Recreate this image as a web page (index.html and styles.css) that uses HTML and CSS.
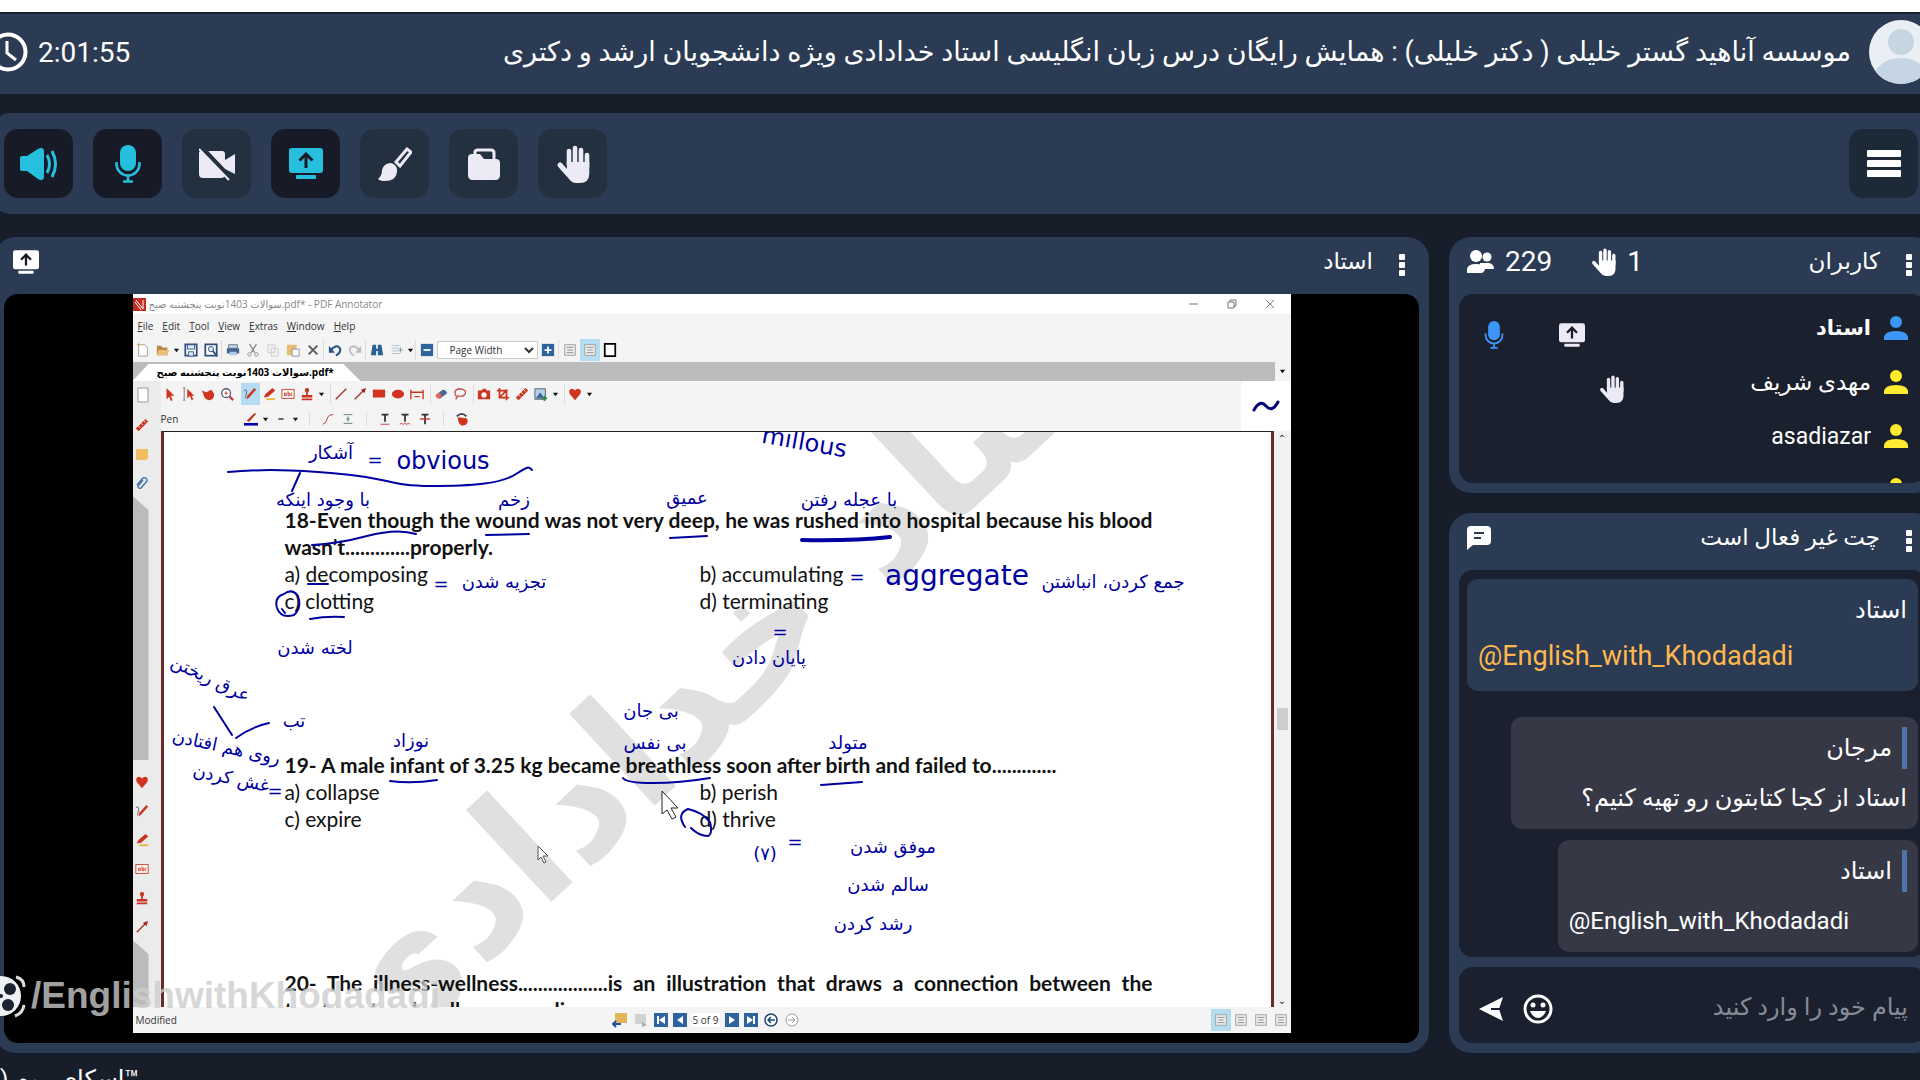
FILE: index.html
```html
<!DOCTYPE html>
<html lang="fa">
<head>
  <meta charset="UTF-8" />
  <title>Online Class</title>
  <link rel="stylesheet" href="styles.css">
</head>
<body>
  <!-- icons shared by the room and by the shared window -->
  <svg class="sprite" aria-hidden="true">
    <symbol id="i-hand" viewBox="0 0 34 38">
      <g fill="none" stroke="currentColor" stroke-width="5" stroke-linecap="round"><path d="M13 20V6M19 18V3M25 18V5M31 22V10" stroke-width="4.6"/><path d="M4 20l8 9"/></g>
      <path fill="currentColor" d="M10.700 17H33.300V29Q33 38 24 38H20Q16 38 13 34L7 26l4-2z"/>
    </symbol>
    <symbol id="i-mic" viewBox="0 0 26 38">
      <rect x="5" y="0" width="16" height="26" rx="8" fill="currentColor"/>
      <path d="M1.500 17v2a11.500 11.500 0 0 0 23 0v-2M13 31v5M8 36.500h10" fill="none" stroke="currentColor" stroke-width="2.500"/>
    </symbol>
    <symbol id="i-share" viewBox="0 0 34 31">
      <rect x="0" y="0" width="34" height="25" rx="3" fill="currentColor"/>
      <rect x="7" y="27" width="20" height="4" rx="1" fill="currentColor"/>
      <path d="M17 20V6M10.500 12.500L17 6l6.500 6.500" fill="none" stroke="#171b28" stroke-width="3"/>
    </symbol>
    <symbol id="i-user" viewBox="0 0 24 24">
      <circle cx="12" cy="6" r="6" fill="currentColor"/><path d="M0 24v-3q1-6 12-6t12 6v3z" fill="currentColor"/>
    </symbol>
    <symbol id="i-dots" viewBox="0 0 6 22">
      <g fill="currentColor"><rect width="6" height="6" rx="1"/><rect y="8" width="6" height="6" rx="1"/><rect y="16" width="6" height="6" rx="1"/></g>
    </symbol>
    <symbol id="p-down" viewBox="0 0 8 8"><path d="M1 2h6L4 6z" fill="#111"/></symbol>
    <symbol id="p-pen" viewBox="0 0 16 16"><path d="M1 4q4-2 3 3t-1 6" fill="none" stroke="#557" /><path d="M4 14l1-4 8-9 2 2-8 9z" fill="#c8341f"/></symbol>
    <symbol id="p-marker" viewBox="0 0 16 16"><path d="M2 12l2-4 8-7 3 3-8 7z" fill="#c8341f"/><path d="M5 14h10" stroke="#f0b030" stroke-width="2"/></symbol>
    <symbol id="p-text" viewBox="0 0 16 16"><rect x="1" y="3" width="14" height="10" fill="#fff" stroke="#c8341f"/><path d="M4 10V7h2v3zM8 5v5h2V7H8M13 7h-1.500v3H13" fill="none" stroke="#c8341f"/></symbol>
    <symbol id="p-stamp" viewBox="0 0 16 16"><circle cx="8" cy="3.500" r="2.500" fill="#c8341f"/><path d="M7 5h2v4h5v3H2V9h5zM2 13h12v2H2z" fill="#c8341f"/></symbol>
    <symbol id="p-arrow" viewBox="0 0 16 16"><path d="M2 14L12 4" stroke="#a02a20" stroke-width="1.500"/><path d="M9 3l6-2-2 6z" fill="#a02a20"/></symbol>
    <symbol id="p-heart" viewBox="0 0 16 16"><path d="M8 15L2 8q-2-5 2-6 3 0 4 2 1-2 4-2 4 1 2 6z" fill="#d0341f"/></symbol>
    <symbol id="p-page" viewBox="0 0 16 16"><path d="M3 1h10v14H3z" fill="#fff" stroke="#999"/></symbol>
    <symbol id="p-ruler" viewBox="0 0 16 16"><path d="M1 12L12 1l3 3L4 15z" fill="#c8341f"/><path d="M4 9l2 2M7 6l2 2M10 3l2 2" stroke="#fff"/></symbol>
    <symbol id="p-fit" viewBox="0 0 16 16"><rect x="2" y="2" width="12" height="12" fill="#eee" stroke="#999"/><path d="M4 5h8M4 11h8M5 8h6" stroke="#888"/></symbol>
  </svg>

  <div class="app">
    <header class="topbar">
      <div class="timer">
        <svg width="40" height="40" viewBox="0 0 40 40"><circle cx="20" cy="20" r="17.500" fill="none" stroke="#fff" stroke-width="4"/><path d="M19 9v12l9 7" fill="none" stroke="#fff" stroke-width="3"/></svg>
        <span>2:01:55</span>
      </div>
      <div class="room" dir="rtl">
        <svg width="64" height="64" viewBox="0 0 64 64"><clipPath id="av"><circle cx="32" cy="32" r="32"/></clipPath><g clip-path="url(#av)"><rect width="64" height="64" fill="#e9eff5"/><circle cx="32" cy="22" r="13" fill="#c6d5e0"/><ellipse cx="32" cy="58" rx="27" ry="20" fill="#c6d5e6"/></g></svg>
        <h1>موسسه آناهید گستر خلیلی ( دکتر خلیلی) : همایش رایگان درس زبان انگلیسی استاد خدادادی ویژه دانشجویان ارشد و دکتری</h1>
      </div>
    </header>

    <nav class="toolbar">
      <button class="tool on" aria-label="Speaker"><svg width="38" height="32" viewBox="0 0 38 32"><path fill="currentColor" d="M0 10q0-2 2-2h5L18 1q6-3 6 3v24q0 6-6 3L7 23H2q-2 0-2-2z"/><path d="M27 7q5 9 0 18M32 3q7 13 0 26" fill="none" stroke="currentColor" stroke-width="3"/></svg></button>
      <button class="tool on" aria-label="Microphone"><svg width="26" height="38"><use href="#i-mic"/></svg></button>
      <button class="tool" aria-label="Camera"><svg width="36" height="34" viewBox="0 0 36 34"><path fill="currentColor" d="M0 6q0-2 3-2h20q3 0 3 3v6l10-6v20l-10-5v5q0 4-4 4H4q-4 0-4-4z"/><path d="M2 0l31 33" stroke="#22303f" stroke-width="5"/><path d="M0 2l30 31" stroke="currentColor" stroke-width="2"/></svg></button>
      <button class="tool on" aria-label="Share screen"><svg width="34" height="31"><use href="#i-share"/></svg></button>
      <button class="tool" aria-label="Whiteboard"><svg width="34" height="34" viewBox="0 0 34 34"><path fill="currentColor" d="M0 32q4-3 4-9 2-7 9-7 7 2 6 9-1 9-12 9-5 0-7-2z"/><path d="M18 15L29 2l4 3-11 14z" fill="none" stroke="currentColor" stroke-width="3"/></svg></button>
      <button class="tool" aria-label="Files"><svg width="32" height="32" viewBox="0 0 32 32"><path d="M7 7V4q0-2 3-2h13q3 0 3 3v7" fill="none" stroke="currentColor" stroke-width="3"/><path fill="currentColor" d="M0 10q0-4 4-4h8l4 5h12q4 0 4 4v12q0 5-5 5H5q-5 0-5-5z"/></svg></button>
      <button class="tool" aria-label="Raise hand"><svg width="34" height="38"><use href="#i-hand"/></svg></button>
      <button class="tool menu" aria-label="Menu"><svg width="34" height="28" viewBox="0 0 34 28"><g fill="#fff"><rect width="34" height="7" rx="1"/><rect y="10" width="34" height="7" rx="1"/><rect y="20" width="34" height="7" rx="1"/></g></svg></button>
    </nav>

    <main class="columns">
      <section class="panel stage">
        <div class="panel-head">
          <svg width="26" height="24"><use href="#i-share"/></svg>
          <h2>استاد</h2>
          <button class="dots" aria-label="More"><svg width="6" height="22"><use href="#i-dots"/></svg></button>
        </div>
        <div class="screen">
          <div class="window">
            <div class="titlebar">
              <svg width="13" height="13" viewBox="0 0 13 13"><rect width="13" height="13" fill="#c22b22"/><path d="M3 2l7 9V2M2 4l6 8" stroke="#fff" fill="none"/></svg>
              <span>سوالات 1403نوبت پنجشنبه صبح.pdf* - PDF Annotator</span>
              <svg class="winctl" width="90" height="12" viewBox="0 0 90 12"><path d="M2 6h9M41 4h6v6h-6zM43 4V2h6v6h-2M79 2l8 8M87 2l-8 8" fill="none" stroke="#777"/></svg>
            </div>
            <div class="menubar"><span><u>F</u>ile</span><span><u>E</u>dit</span><span><u>T</u>ool</span><span><u>V</u>iew</span><span><u>E</u>xtras</span><span><u>W</u>indow</span><span><u>H</u>elp</span></div>
            <div class="icons main-icons">
              <i><svg viewBox="0 0 16 16"><path d="M3 2h7l3 3v10H3z" fill="#fff" stroke="#999"/><path d="M1 2h4M3 0v4" stroke="#e0a040"/></svg></i>
              <i><svg viewBox="0 0 16 16"><path d="M1 3h5l1 2h6v9H1z" fill="#b98a4a"/><path d="M3 8h12l-2 6H1z" fill="#e9bf73"/></svg></i>
              <i class="dd"><svg><use href="#p-down"/></svg></i>
              <i><svg viewBox="0 0 16 16"><path d="M1.500 1.500h13v13h-13z" fill="#fff" stroke="#2d4f7c" stroke-width="2"/><path d="M4 2h8v5H4zM5 10h6v5H5z" fill="#dde6f0" stroke="#2d4f7c"/></svg></i>
              <i><svg viewBox="0 0 16 16"><path d="M1.500 1.500h13v13h-13z" fill="#fff" stroke="#2d4f7c" stroke-width="2"/><circle cx="8" cy="7" r="3" fill="#dde6f0" stroke="#2d4f7c"/><path d="M10 9l5 6" stroke="#2d4f7c" stroke-width="2"/></svg></i>
              <b></b>
              <i><svg viewBox="0 0 16 16"><path d="M3 2h10v4H3z" fill="#cdd9e5" stroke="#567"/><path d="M1 6h14v6H1z" fill="#44658c"/><path d="M4 10h8v4H4z" fill="#a9cbe8"/></svg></i>
              <i><svg viewBox="0 0 16 16"><path d="M4 1l6 10M12 1L6 11" stroke="#888" stroke-width="1.500"/><circle cx="4" cy="13" r="2" fill="none" stroke="#888"/><circle cx="12" cy="13" r="2" fill="none" stroke="#888"/></svg></i>
              <i><svg viewBox="0 0 16 16"><path d="M2 2h8v9H2zM6 6h8v9H6z" fill="#f0f0f0" stroke="#ccc"/></svg></i>
              <i><svg viewBox="0 0 16 16"><path d="M1 2h11v12H1z" fill="#e7bd72"/><path d="M7 7h8v8H7z" fill="#fff" stroke="#889"/></svg></i>
              <i><svg viewBox="0 0 16 16"><path d="M3 3l10 10M13 3L3 13" stroke="#555" stroke-width="2"/></svg></i>
              <b></b>
              <i><svg viewBox="0 0 16 16"><path d="M3 8q8-8 11-1 0 5-5 7" fill="none" stroke="#2b5585" stroke-width="2.500"/><path d="M1 3v8h7z" fill="#2b5585"/></svg></i>
              <i><svg viewBox="0 0 16 16"><path d="M13 8Q5 0 2 7q0 5 5 7" fill="none" stroke="#bbb" stroke-width="2"/><path d="M15 3v8H8z" fill="#bbb"/></svg></i>
              <b></b>
              <i><svg viewBox="0 0 16 16"><path d="M3 2h4v4l1 1 1-1V2h4l2 12H9V9H7v5H1z" fill="#2b5f96"/></svg></i>
              <i><svg viewBox="0 0 16 16"><path d="M2 3h9M2 6h9M2 9h9M2 12h9" stroke="#abc"/><path d="M10 8h5M12 5v6" stroke="#79a"/></svg></i>
              <i class="dd"><svg><use href="#p-down"/></svg></i>
              <b></b>
              <i><svg viewBox="0 0 16 16"><rect x="1" y="1" width="14" height="14" fill="#2e639c"/><path d="M4 8h8" stroke="#fff" stroke-width="2"/></svg></i>
              <select aria-label="Zoom"><option>Page Width</option></select>
              <i><svg viewBox="0 0 16 16"><rect x="1" y="1" width="14" height="14" fill="#2e639c"/><path d="M4 8h8M8 4v8" stroke="#fff" stroke-width="2"/></svg></i>
              <b></b>
              <i><svg><use href="#p-fit"/></svg></i>
              <i class="sel"><svg><use href="#p-fit"/></svg></i>
              <i><svg viewBox="0 0 16 16"><rect x="2" y="1" width="12" height="14" fill="#fff" stroke="#000" stroke-width="2"/></svg></i>
            </div>
            <div class="tabs"><span class="tab">سوالات 1403نوبت پنجشنبه صبح.pdf*</span><i class="dd"><svg><use href="#p-down"/></svg></i></div>

            <div class="work">
              <aside class="rail">
                <svg width="16" height="16"><use href="#p-page"/></svg>
                <svg width="14" height="14"><use href="#p-ruler"/></svg>
                <svg width="14" height="14" viewBox="0 0 14 14"><path d="M1 2h12v10l-3 1H1z" fill="#efbd62"/></svg>
                <svg width="14" height="14" viewBox="0 0 14 14"><path d="M2 9l6-7q4-1 4 3l-6 7q-3 1-3-2l5-6" fill="none" stroke="#4a77a8" stroke-width="1.500"/></svg>
                <span class="rail-fill"></span>
                <svg width="14" height="14"><use href="#p-heart"/></svg>
                <svg width="14" height="14"><use href="#p-pen"/></svg>
                <svg width="14" height="14"><use href="#p-marker"/></svg>
                <svg width="14" height="14"><use href="#p-text"/></svg>
                <svg width="14" height="14"><use href="#p-stamp"/></svg>
                <svg width="14" height="14"><use href="#p-arrow"/></svg>
                <span class="rail-fill end"></span>
              </aside>

              <div class="pane">
                <div class="pentools">
                  <div>
                    <div class="icons draw-icons">
                      <i><svg viewBox="0 0 16 16"><path d="M4 1l9 9H9l2 5-2 1-2-5-3 3z" fill="#d0341f"/></svg></i>
                      <i><svg viewBox="0 0 16 16"><path d="M1 1h3M2.500 1v14M1 15h3" stroke="#777"/><path d="M6 2l8 8h-3l2 4-2 1-2-5-3 3z" fill="#d0341f"/></svg></i>
                      <i><svg viewBox="0 0 16 16"><path d="M1 4l5 2 6-3 3 5q0 7-6 7-5-1-6-6z" fill="#d0341f"/></svg></i>
                      <i><svg viewBox="0 0 16 16"><circle cx="7" cy="7" r="5" fill="#fff" stroke="#557" stroke-width="1.500"/><path d="M5 7h4M7 5v4" stroke="#c33"/><path d="M11 11l4 4" stroke="#c33" stroke-width="2.500"/></svg></i>
                      <i class="sel"><svg><use href="#p-pen"/></svg></i>
                      <i><svg><use href="#p-marker"/></svg></i>
                      <i><svg><use href="#p-text"/></svg></i>
                      <i><svg><use href="#p-stamp"/></svg></i>
                      <i class="dd"><svg><use href="#p-down"/></svg></i>
                      <b></b>
                      <i><svg viewBox="0 0 16 16"><path d="M2 14L14 2" stroke="#a02a20" stroke-width="1.500"/></svg></i>
                      <i><svg><use href="#p-arrow"/></svg></i>
                      <i><svg viewBox="0 0 16 16"><rect x="1" y="3" width="14" height="9" fill="#d0341f"/></svg></i>
                      <i><svg viewBox="0 0 16 16"><ellipse cx="8" cy="8" rx="7" ry="5" fill="#d0341f"/></svg></i>
                      <i><svg viewBox="0 0 16 16"><path d="M1 3v11M15 3v11M1 6h14M5 11h6" stroke="#c8341f" stroke-width="1.500"/></svg></i>
                      <b></b>
                      <i><svg viewBox="0 0 16 16"><path d="M2 9l8-6q4 0 5 4l-8 6q-5 0-5-4z" fill="#44679c"/><path d="M2 9l4-3q3 2 3 6l-2 1q-5 0-5-4z" fill="#e06a5a"/></svg></i>
                      <i><svg viewBox="0 0 16 16"><path d="M4 11q-5-8 4-9 8 1 6 6-3 4-8 2l-3 4" fill="none" stroke="#b55" stroke-width="1.500"/></svg></i>
                      <b></b>
                      <i><svg viewBox="0 0 16 16"><path d="M1 4h4l2-2h3l1 2h4v10H1z" fill="#d0341f"/><circle cx="8" cy="9" r="3" fill="#fff"/></svg></i>
                      <i><svg viewBox="0 0 16 16"><path d="M4 1v11h11M1 4h11v11M4 12l9-9" fill="none" stroke="#d0341f" stroke-width="2"/></svg></i>
                      <i><svg><use href="#p-ruler"/></svg></i>
                      <i><svg viewBox="0 0 16 16"><path d="M1 2h12v12H1z" fill="#b8d0e6" stroke="#456"/><path d="M2 13l5-7 5 7z" fill="#3c6a97"/><path d="M9 13h6M12 10v6" stroke="#2a8a4a" stroke-width="2"/></svg></i>
                      <i class="dd"><svg><use href="#p-down"/></svg></i>
                      <b></b>
                      <i><svg><use href="#p-heart"/></svg></i>
                      <i class="dd"><svg><use href="#p-down"/></svg></i>
                    </div>
                    <div class="icons pen-icons">
                      <span class="penname">Pen</span>
                      <i><svg viewBox="0 0 16 16"><path d="M3 10L12 1l2 1-8 9z" fill="#c8341f"/><path d="M0 14h16" stroke="#0000b0" stroke-width="3"/></svg></i>
                      <i class="dd"><svg><use href="#p-down"/></svg></i>
                      <i><svg viewBox="0 0 16 16"><path d="M5 8h6" stroke="#222" stroke-width="1.500"/></svg></i>
                      <i class="dd"><svg><use href="#p-down"/></svg></i>
                      <b></b>
                      <i><svg viewBox="0 0 16 16"><path d="M2 14q4-1 5-6 1-5 7-5" fill="none" stroke="#a02a20"/></svg></i>
                      <i><svg viewBox="0 0 16 16"><path d="M3 3h10M3 13h10M8 5v6M6 8h4" stroke="#577" fill="none"/></svg></i>
                      <b></b>
                      <i><svg viewBox="0 0 16 16"><path d="M4 3h8M8 3v8" stroke="#333" stroke-width="2"/><path d="M3 14h10" stroke="#c33"/></svg></i>
                      <i><svg viewBox="0 0 16 16"><path d="M4 3h8M8 3v8" stroke="#333" stroke-width="2"/><path d="M2 14l2-1 2 1 2-1 2 1 2-1 2 1" stroke="#c33" fill="none"/></svg></i>
                      <i><svg viewBox="0 0 16 16"><path d="M4 3h8M8 3v11" stroke="#333" stroke-width="2"/><path d="M2 8h12" stroke="#c33" stroke-width="1.500"/></svg></i>
                      <b></b>
                      <i><svg viewBox="0 0 16 16"><path d="M2 5q6-6 11 0" fill="none" stroke="#345" stroke-width="2"/><path d="M3 6l10 1q3 3 0 7-6 4-9-3z" fill="#d0341f"/></svg></i>
                    </div>
                  </div>
                  <div class="preview"><svg width="30" height="14" viewBox="0 0 30 14"><path d="M3 11q6-11 12-4t12-4" fill="none" stroke="#00007a" stroke-width="3" stroke-linecap="round"/></svg></div>
                </div>

                <div class="doc">
                  <div class="page">
                    <svg class="mark" viewBox="160 431 1113 576" aria-hidden="true">
                      <text transform="translate(784 684) rotate(-43)" text-anchor="middle" direction="rtl">استاد خدادادی</text>
                    </svg>
                    <div class="question">
                      <p class="full">18-Even though the wound was not very deep, he was rushed into hospital because his blood</p>
                      <p>wasn’t.............properly.</p>
                      <ul><li>a) decomposing</li><li>b) accumulating</li><li>c) clotting</li><li>d) terminating</li></ul>
                    </div>
                    <div class="question">
                      <p>19- A male infant of 3.25 kg became breathless soon after birth and failed to.............</p>
                      <ul><li>a) collapse</li><li>b) perish</li><li>c) expire</li><li>d) thrive</li></ul>
                    </div>
                    <div class="question">
                      <p class="full">20- The illness-wellness..................is an illustration that draws a connection between the</p>
                      <p>treatment and wellness paradigms.</p>
                    </div>
                    <!-- pen notes written over the page -->
                    <svg class="ink" viewBox="160 431 1113 576">
                      <g class="notes">
                        <text x="330" y="459">آشکار</text><text x="374" y="466">=</text><text class="big" x="442" y="469">obvious</text>
                        <text class="big" transform="translate(802 450) rotate(10)">millous</text>
                        <text x="322" y="506">با وجود اینکه</text><text x="513" y="506">زخم</text><text x="686" y="504">عمیق</text><text x="848" y="506">با عجله رفتن</text>
                        <text x="440" y="590">=</text><text x="503" y="588">تجزیه شدن</text><text x="314" y="654">لخته شدن</text>
                        <text x="856" y="583">=</text><text class="huge" x="956" y="585">aggregate</text><text x="1112" y="588">جمع کردن، انباشتن</text>
                        <text x="779" y="638">=</text><text x="768" y="664">پایان دادن</text>
                        <text transform="translate(207 684) rotate(25)">عرق ریختن</text><text x="293" y="727">تب</text>
                        <text transform="translate(224 753) rotate(12)">روی هم افتادن</text><text transform="translate(229 784) rotate(12)">غش کردن</text><text x="274" y="797">=</text>
                        <text x="410" y="747">نوزاد</text><text x="650" y="717">بی جان</text><text x="654" y="749">بی نفس</text><text x="847" y="749">متولد</text>
                        <text x="764" y="860">(۷)</text><text x="794" y="848">=</text>
                        <text x="892" y="853">موفق شدن</text><text x="887" y="891">سالم شدن</text><text x="872" y="930">رشد کردن</text>
                      </g>
                      <g class="strokes">
                        <path d="M227 472C270 468 310 471 350 475S390 486 430 486 500 484 515 474 528 468 531 470"/>
                        <path d="M299 473l-8 18M311 545q25-1 55-9t49-2M485 535l43-1M669 538l37-2M307 584h20M309 619q16-3 34-2M389 781q22 3 47-1M622 778q3 5 30 5t57-5M820 785l41-3M213 707l18 28M235 738q15-11 33-15"/>
                        <path d="M283 594q8-6 14 2 4 12-4 19-13 4-17-7-3-11 7-14M281 609l3 4M684 827q-9-13 3-18 14 3 22 13 3 12-2 14-9 0-17-8"/>
                        <path class="thick" d="M801 540q50 1 88-3"/>
                      </g>
                      <path d="M661 791v23l5-4 5 9 4-2-5-9h7z" fill="#fff" stroke="#222"/>
                      <path d="M537 846v14l3-3 3 6 2-1-3-6h5z" fill="#fff" stroke="#555"/>
                    </svg>
                  </div>
                  <div class="scrollbar"><span>⌃</span><span class="thumb"></span><span>⌄</span></div>
                </div>
              </div>
            </div>

            <div class="statusbar">
              <span class="modified">Modified</span>
              <svg width="16" height="16" viewBox="0 0 16 16"><path d="M3 1h12v10H3z" fill="#e3b55a"/><path d="M1 12h8M4 9l-3 3 3 3" stroke="#2450a0" stroke-width="2" fill="none"/></svg>
              <svg width="16" height="16" viewBox="0 0 16 16"><path d="M2 2h11v10H2z" fill="#d2d2d2"/><path d="M9 10l5 3-5 2z" fill="#aaa"/></svg>
              <svg width="14" height="14" viewBox="0 0 14 14"><rect width="14" height="14" fill="#2e639c"/><path d="M3 3h2v8H3zM11 3v8L5 7z" fill="#fff"/></svg>
              <svg width="14" height="14" viewBox="0 0 14 14"><rect width="14" height="14" fill="#2e639c"/><path d="M10 3v8L4 7z" fill="#fff"/></svg>
              <span class="pageno">5 of 9</span>
              <svg width="14" height="14" viewBox="0 0 14 14"><rect width="14" height="14" fill="#2e639c"/><path d="M4 3v8l6-4z" fill="#fff"/></svg>
              <svg width="14" height="14" viewBox="0 0 14 14"><rect width="14" height="14" fill="#2e639c"/><path d="M9 3h2v8H9zM3 3v8l6-4z" fill="#fff"/></svg>
              <svg width="16" height="16" viewBox="0 0 16 16"><circle cx="8" cy="8" r="6" fill="#fff" stroke="#1d4674" stroke-width="1.500"/><path d="M12 8H5M8 5L5 8l3 3" stroke="#1d4674" fill="none" stroke-width="1.500"/></svg>
              <svg width="16" height="16" viewBox="0 0 16 16"><circle cx="8" cy="8" r="6" fill="#fff" stroke="#999"/><path d="M4 8h7M8 5l3 3-3 3" stroke="#999" fill="none"/></svg>
              <span class="views"><i class="sel"><svg><use href="#p-fit"/></svg></i><i><svg><use href="#p-fit"/></svg></i><i><svg><use href="#p-fit"/></svg></i><i><svg><use href="#p-fit"/></svg></i></span>
            </div>
          </div>
        </div>
        <div class="channel">
          <svg width="54" height="46" viewBox="0 0 54 46"><path d="M42 4q8 2 8 10M50 32q-1 8-9 11" stroke="#ddd" stroke-width="3" fill="none"/><circle cx="27" cy="23" r="20" fill="#eef2f6"/><g fill="#1b2230"><circle cx="20" cy="14" r="6"/><circle cx="36" cy="16" r="6"/><circle cx="34" cy="32" r="6"/><circle cx="18" cy="30" r="6"/><circle cx="27" cy="23" r="2"/></g></svg>
          <span>/EnglishwithKhodadadi</span>
        </div>
      </section>

      <div class="side">
        <section class="panel users">
          <div class="panel-head">
            <svg width="27" height="23" viewBox="0 0 27 23"><g fill="currentColor"><circle cx="9" cy="6" r="6"/><circle cx="20" cy="7" r="4.500"/><path d="M13 13h9q5 1 5 6H13z"/><path d="M0 23v-4q1-5 9-5t9 4v1q-1 4-4 4z"/></g></svg>
            <span class="count">229</span>
            <svg class="raised" width="25" height="28"><use href="#i-hand"/></svg>
            <span class="count">1</span>
            <h2>کاربران</h2>
            <button class="dots" aria-label="More"><svg width="6" height="22"><use href="#i-dots"/></svg></button>
          </div>
          <ul class="user-list" dir="rtl">
            <li class="teacher"><svg width="24" height="24"><use href="#i-user"/></svg><span>استاد</span><svg class="sharing" width="26" height="24"><use href="#i-share"/></svg><svg class="talking" width="20" height="28"><use href="#i-mic"/></svg></li>
            <li><svg width="24" height="24"><use href="#i-user"/></svg><span>مهدی شریف</span><svg class="asking" width="25" height="28"><use href="#i-hand"/></svg></li>
            <li><svg width="24" height="24"><use href="#i-user"/></svg><span>asadiazar</span></li>
            <li><svg width="24" height="24"><use href="#i-user"/></svg></li>
          </ul>
        </section>

        <section class="panel chat">
          <div class="panel-head">
            <svg width="24" height="24" viewBox="0 0 24 24"><path d="M0 24V4q0-4 4-4h16q4 0 4 4v11q0 4-4 4H6z" fill="currentColor"/><path d="M7 7h10M7 12h7" stroke="#2c3b54" stroke-width="2"/></svg>
            <h2>چت غیر فعال است</h2>
            <button class="dots" aria-label="More"><svg width="6" height="22"><use href="#i-dots"/></svg></button>
          </div>
          <div class="messages" dir="rtl">
            <div class="msg pinned"><p>استاد</p><p class="handle" dir="ltr">@English_with_Khodadadi</p></div>
            <div class="msg"><p class="from">مرجان</p><p>استاد از کجا کتابتون رو تهیه کنیم؟</p></div>
            <div class="msg"><p class="from">استاد</p><p class="handle" dir="ltr">@English_with_Khodadadi</p></div>
          </div>
          <div class="compose">
            <button aria-label="Send"><svg width="24" height="24" viewBox="0 0 24 24"><path d="M0 12L24 0l-4 12 4 12z" fill="#fff"/><path d="M12 12h10" stroke="#1a202d" stroke-width="2"/></svg></button>
            <button aria-label="Emoji"><svg width="30" height="30" viewBox="0 0 30 30"><circle cx="15" cy="15" r="13" fill="none" stroke="#fff" stroke-width="3"/><circle cx="10" cy="11" r="2.500" fill="#fff"/><circle cx="20" cy="11" r="2.500" fill="#fff"/><path d="M7 17h16q-3 7-8 7t-8-7z" fill="#fff"/></svg></button>
            <input type="text" dir="rtl" aria-label="پیام" placeholder="پیام خود را وارد کنید">
          </div>
        </section>
      </div>
    </main>

    <footer><span dir="rtl">™اسکای روم (</span></footer>
  </div>
</body>
</html>
```
FILE: styles.css
```css
* {
  box-sizing: border-box;
}
body {
  margin: 0;
  height: 100vh;
  overflow: hidden;
  background: #181d2a;
  border-top: 12px solid #fff;
  color: #fff;
  font-family: Roboto, "DejaVu Sans", sans-serif;
  font-size: 24px;
}
h1, h2, p, ul {
  margin: 0;
  padding: 0;
  font-weight: normal;
}
li {
  list-style: none;
}
button {
  border: 0;
  padding: 0;
  background: none;
  color: inherit;
}
svg {
  display: block;
  flex: none;
}
.sprite {
  position: absolute;
  width: 0;
  height: 0;
}
.app {
  margin: 2px -16px 0 -6px;
}

/* top bar */
.topbar {
  display: flex;
  justify-content: space-between;
  align-items: center;
  height: 80px;
  padding-bottom: 4px;
  background: #2c3b54;
}
.timer {
  display: flex;
  align-items: center;
  gap: 10px;
  margin-left: -6px;
  font-size: 28px;
}
.room {
  display: flex;
  align-items: center;
  gap: 18px;
  margin-right: 3px;
}
.room h1 {
  font-size: 27px;
  white-space: nowrap;
}

.toolbar {
  display: flex;
  gap: 20px;
  margin: 19px 0 23px;
  padding: 16px 18px 16px 10px;
  background: #2c3b54;
  border-radius: 16px;
}
.tool {
  display: flex;
  align-items: center;
  justify-content: center;
  width: 69px;
  height: 69px;
  border-radius: 14px;
  background: #22303f;
  color: #eceaf4;
}
.tool.on {
  background: #171b28;
  color: #26c0de;
}
.tool.menu {
  margin-left: auto;
  background: #1c2937;
}

/* panels */
.columns {
  display: flex;
  gap: 20px;
}
.panel {
  background: #2c3b54;
  border-radius: 22px;
  padding: 0 10px 10px;
}
.panel-head {
  display: flex;
  align-items: center;
  height: 57px;
  padding: 0 14px 8px 9px;
}
.panel-head h2 {
  margin-left: auto;
  font-size: 23px;
}
.dots {
  margin: 7px 0 0 26px;
}
.stage {
  position: relative;
  flex: 1;
  min-width: 0;
}
.screen {
  padding-bottom: 10px;
  border-radius: 14px;
  background: #000;
}

/* shared window */
.window {
  max-width: 1158px;
  margin: 0 auto;
  background: #f4f4f4;
  color: #333;
  font-family: "Open Sans", "DejaVu Sans", sans-serif;
  font-size: 10px;
}
.titlebar {
  display: flex;
  align-items: center;
  gap: 3px;
  height: 20px;
  padding: 0 14px 0 0;
  background: #fff;
  color: #888;
}
.winctl {
  margin-left: auto;
}
.menubar {
  display: flex;
  align-items: center;
  gap: 9px;
  height: 24px;
  padding: 0 5px;
}
.icons {
  display: flex;
  align-items: center;
}
.icons i, .views i, .tabs i {
  display: flex;
  align-items: center;
  justify-content: center;
  width: 20px;
  height: 22px;
}
.icons svg, .views svg {
  width: 14px;
  height: 14px;
}
.icons .dd {
  width: 8px;
}
.icons .dd svg, .tabs .dd svg {
  width: 7px;
  height: 7px;
}
.icons b {
  width: 1px;
  height: 20px;
  margin-right: 1px;
  background: #ddd;
}
.icons .sel, .views .sel {
  background: #b5dcf0;
}
.main-icons {
  height: 24px;
}
.main-icons select {
  width: 101px;
  height: 18px;
  padding: 0 0 0 8px;
  border: 1px solid #ccc;
  border-radius: 0;
  background: #fff;
  color: #333;
  font: inherit;
}
.tabs {
  display: flex;
  justify-content: space-between;
  height: 19px;
  background: #bcbcbc;
}
.tab {
  width: 228px;
  padding-left: 24px;
  background: #fff;
  clip-path: polygon(16px 2px, 211px 2px, 100% 100%, 0 100%);
  color: #000;
  font-weight: bold;
  line-height: 20px;
  white-space: nowrap;
}
.tabs .dd {
  width: 16px;
  height: 19px;
  background: #f4f4f4;
}
.work {
  display: flex;
}
.rail {
  display: flex;
  flex-direction: column;
  gap: 15px;
  width: 28px;
  padding: 6px 0 0 2px;
  background: #ebebeb;
}
.rail-fill {
  width: 16px;
  height: 264px;
  margin: -9px 0 0 -2px;
  background: #bbb;
  clip-path: polygon(0 0, 100% 14px, 100% 100%, 0 100%);
}
.rail-fill.end {
  flex: 1;
  height: auto;
}
.pane {
  flex: 1;
}
.pentools {
  display: flex;
  justify-content: space-between;
}
.draw-icons {
  height: 26px;
}
.draw-icons i {
  width: 19px;
}
.draw-icons .sel {
  margin-left: 4px;
}
.draw-icons .dd, .pen-icons .dd {
  width: 10px;
}
.draw-icons b {
  margin: 0 1px 0 3px;
}
.pen-icons {
  height: 24px;
}
.penname {
  width: 80px;
}
.pen-icons b {
  margin: 0 8px;
  height: 14px;
}
.preview {
  display: flex;
  align-items: center;
  justify-content: center;
  width: 50px;
  background: #fff;
}
.doc {
  display: flex;
  height: 576px;
}
.page {
  position: relative;
  flex: 1;
  overflow: hidden;
  padding: 74px 118px 0 121px;
  border: solid #6b2a2a;
  border-width: 0 3px;
  border-top: 1px solid #222;
  background: #fff;
  color: #111;
  font-family: Lato, sans-serif;
  font-size: 21px;
  line-height: 27px;
}
.question {
  position: relative;
  margin-bottom: 137px;
}
.question p {
  font-weight: bold;
  white-space: nowrap;
}
.question .full {
  text-align-last: justify;
}
.question ul {
  display: grid;
  grid-template-columns: 415px 1fr;
}
.mark, .ink {
  position: absolute;
  left: -3px;
  top: -1px;
  width: 1113px;
  height: 576px;
}
.mark text {
  font: bold 165px "DejaVu Sans", sans-serif;
  fill: #e0e0e0;
}
.notes text {
  font: 18px "DejaVu Sans", sans-serif;
  fill: #0000a0;
  text-anchor: middle;
}
.notes .big {
  font-size: 24px;
}
.notes .huge {
  font-size: 28px;
}
.strokes {
  fill: none;
  stroke: #0000a0;
  stroke-width: 2;
  stroke-linecap: round;
}
.strokes .thick {
  stroke-width: 4;
}
.scrollbar {
  display: flex;
  flex-direction: column;
  align-items: center;
  justify-content: space-between;
  width: 17px;
  background: #f2f2f2;
}
.thumb {
  width: 11px;
  height: 22px;
  background: #cdcdcd;
}
.statusbar {
  display: flex;
  align-items: center;
  gap: 5px;
  height: 26px;
  padding: 0 0 0 3px;
}
.modified {
  width: 471px;
}
.pageno {
  width: 28px;
  text-align: center;
  white-space: nowrap;
  background: #fff;
}
.views {
  display: flex;
  margin-left: auto;
}
.channel {
  position: absolute;
  left: -20px;
  bottom: 34px;
  display: flex;
  align-items: center;
  gap: 3px;
  color: rgba(205, 205, 205, 0.8);
  font-family: "Liberation Sans", sans-serif;
  font-size: 37px;
  font-weight: bold;
}

/* users and chat */
.side {
  display: flex;
  flex-direction: column;
  gap: 20px;
  width: 487px;
}
.side .panel-head {
  padding-left: 8px;
}
.count {
  margin: 0 0 0 11px;
  font-size: 28px;
}
.raised {
  margin-left: 39px;
}
.user-list {
  height: 189px;
  overflow: hidden;
  padding: 7px 18px 0 0;
  border-radius: 14px;
  background: #1a202d;
}
.user-list li {
  display: flex;
  align-items: center;
  gap: 13px;
  height: 54px;
  color: #ffeb2f;
}
.user-list span {
  color: #fff;
  font-size: 23px;
}
.user-list .teacher {
  color: #3d95f5;
}
.teacher span {
  font-size: 21px;
  font-weight: bold;
}
.user-list .sharing {
  margin: 14px auto 0 0;
  color: #eceaf4;
}
.user-list .talking {
  margin: 14px 42px 0 25px;
}
.user-list .asking {
  margin: 14px auto 0 140px;
  color: #eceaf4;
}
.chat {
  flex: 1;
}
.messages {
  display: flex;
  flex-direction: column;
  align-items: flex-start;
  gap: 11px;
  height: 387px;
  padding: 9px 8px 0;
  border-radius: 14px;
  background: #1a202d;
}
.msg {
  display: flex;
  flex-direction: column;
  gap: 8px;
  height: 112px;
  padding: 10px 11px;
  border-radius: 11px;
  background: #363846;
  line-height: 42px;
}
.msg p:last-child {
  white-space: nowrap;
}
.msg .handle {
  padding-right: 58px;
}
.msg:nth-child(2) {
  padding-left: 70px;
}
.msg .from {
  padding-right: 10px;
  border-right: 5px solid #4f75a8;
}
.msg.pinned {
  align-self: stretch;
  gap: 4px;
  margin-bottom: 15px;
  background: #2c3b54;
}
.pinned .handle {
  font-size: 27px;
  color: #ffb84d;
}
.compose {
  display: flex;
  align-items: center;
  gap: 20px;
  height: 76px;
  margin-top: 10px;
  padding: 8px 18px 0 20px;
  border-radius: 14px;
  background: #1a202d;
}
.compose input {
  flex: 1;
  min-width: 0;
  border: 0;
  padding: 0 0 4px;
  background: none;
  color: #fff;
  font: inherit;
}
.compose input::placeholder {
  color: #868b98;
}
footer {
  margin: 12px 0 0 6px;
}
```
